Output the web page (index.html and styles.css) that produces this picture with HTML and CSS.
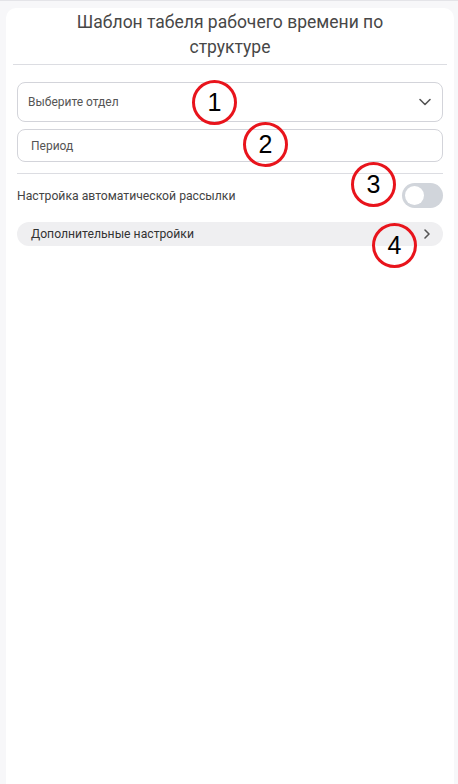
FILE: index.html
```html
<!DOCTYPE html>
<html lang="ru">
<head>
  <meta charset="UTF-8" />
  <meta name="viewport" content="width=device-width, initial-scale=1" />
  <title>Шаблон табеля</title>
  <link rel="stylesheet" href="styles.css">
</head>
<body>
  <div class="card">
    <h1 class="title">Шаблон табеля рабочего времени по структуре</h1>

    <div class="form">
      <div class="field select">
        <span>Выберите отдел</span>
        <svg width="14" height="14" viewBox="0 0 14 14"><path d="M2 4.5 L7 9.5 L12 4.5" fill="none" stroke="#555" stroke-width="1.6" stroke-linecap="round" stroke-linejoin="round"/></svg>
        <span class="mark mark-1">1</span>
      </div>

      <div class="field period">
        <span>Период</span>
        <span class="mark mark-2">2</span>
      </div>

      <div class="divider"></div>

      <div class="toggle-row">
        <span>Настройка автоматической рассылки</span>
        <div class="toggle"><div class="knob"></div></div>
        <span class="mark mark-3">3</span>
      </div>

      <div class="more">
        <span>Дополнительные настройки</span>
        <svg width="12" height="12" viewBox="0 0 12 12"><path d="M4 2 L8 6 L4 10" fill="none" stroke="#555" stroke-width="1.6" stroke-linecap="round" stroke-linejoin="round"/></svg>
        <span class="mark mark-4">4</span>
      </div>
    </div>
  </div>
</body>
</html>
```

FILE: styles.css
```css
* {
  box-sizing: border-box;
}

html, body {
  margin: 0;
  padding: 0;
  background: #f7f7f9;
  font-family: Roboto, "Noto Sans", sans-serif;
  color: #444;
}

body {
  border-top: 1px solid #e4e4e8;
  padding: 7px 4px 0 6px;
  height: 784px;
  overflow: hidden;
}

.card {
  background: #fff;
  border-radius: 10px 10px 0 0;
  height: 100%;
  padding: 0 7px;
}

.title {
  margin: 0;
  padding: 2px 50px 4px;
  font-size: 17.5px;
  line-height: 25px;
  font-weight: 400;
  text-align: center;
  color: #474747;
  border-bottom: 1px solid #dcdde2;
}

.form {
  position: relative;
  padding: 17px 4px 0;
  display: flex;
  flex-direction: column;
}

.field {
  position: relative;
  display: flex;
  align-items: center;
  justify-content: space-between;
  border: 1px solid #d3d4da;
  border-radius: 8px;
  font-size: 12px;
  color: #555;
}

.select {
  height: 40px;
  padding: 0 10px 0 10px;
}

.period {
  height: 33px;
  margin-top: 7px;
  padding: 0 13px;
}

.divider {
  height: 1px;
  background: #dcdde2;
  margin: 11px 0 9px;
}

.toggle-row {
  position: relative;
  display: flex;
  align-items: center;
  justify-content: space-between;
  font-size: 12.2px;
  color: #444;
}

.toggle {
  width: 41px;
  height: 25px;
  border-radius: 13px;
  background: #d1d5db;
  padding: 3px;
}

.knob {
  width: 19px;
  height: 19px;
  border-radius: 50%;
  background: #fff;
}

.more {
  position: relative;
  display: flex;
  align-items: center;
  justify-content: space-between;
  height: 24px;
  margin-top: 14px;
  padding: 0 10px 0 14px;
  border-radius: 12px;
  background: #efeff1;
  font-size: 12.2px;
  font-weight: 400;
  color: #333;
}

.mark {
  position: absolute;
  width: 45px;
  height: 45px;
  border: 3.5px solid #e8141c;
  border-radius: 50%;
  display: flex;
  align-items: center;
  justify-content: center;
  font-family: "Liberation Sans", Arial, sans-serif;
  font-size: 25px;
  color: #000;
  background: transparent;
}

.mark-1 {
  left: 174px;
  top: -3px;
}

.mark-2 {
  left: 225px;
  top: -8px;
}

.mark-3 {
  left: 334px;
  top: -21px;
}

.mark-4 {
  left: 355px;
  top: 1px;
}
```
